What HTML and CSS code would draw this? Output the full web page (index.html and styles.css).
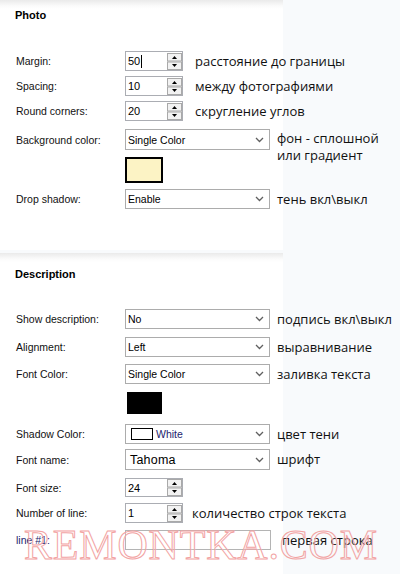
FILE: index.html
```html
<!DOCTYPE html>
<html>
<head>
<meta charset="utf-8">
<link rel="stylesheet" href="styles.css">
</head>
<body>
<div class="page">
  <section class="panel panel-photo">
    <h2 class="panel-title">Photo</h2>
    <div class="row first-photo">
      <span class="lbl">Margin:</span>
      <div class="spin"><span class="val">50<span class="caret"></span></span>
        <svg class="spin-btns" width="15" height="17" viewBox="0 0 15 17"><rect x="0.5" y="0.5" width="14" height="7.5" fill="#f2f2f2" stroke="#a9a9a9"/><rect x="0.5" y="9" width="14" height="7.5" fill="#f2f2f2" stroke="#a9a9a9"/><path d="M5 6 L7.5 3 L10 6 Z" fill="#000"/><path d="M5 11 L7.5 14 L10 11 Z" fill="#000"/></svg>
      </div>
      <span class="hint hs">расстояние до границы</span>
    </div>
    <div class="row g5">
      <span class="lbl">Spacing:</span>
      <div class="spin"><span class="val">10</span>
        <svg class="spin-btns" width="15" height="17" viewBox="0 0 15 17"><rect x="0.5" y="0.5" width="14" height="7.5" fill="#f2f2f2" stroke="#a9a9a9"/><rect x="0.5" y="9" width="14" height="7.5" fill="#f2f2f2" stroke="#a9a9a9"/><path d="M5 6 L7.5 3 L10 6 Z" fill="#000"/><path d="M5 11 L7.5 14 L10 11 Z" fill="#000"/></svg>
      </div>
      <span class="hint hs">между фотографиями</span>
    </div>
    <div class="row g5">
      <span class="lbl">Round corners:</span>
      <div class="spin"><span class="val">20</span>
        <svg class="spin-btns" width="15" height="17" viewBox="0 0 15 17"><rect x="0.5" y="0.5" width="14" height="7.5" fill="#f2f2f2" stroke="#a9a9a9"/><rect x="0.5" y="9" width="14" height="7.5" fill="#f2f2f2" stroke="#a9a9a9"/><path d="M5 6 L7.5 3 L10 6 Z" fill="#000"/><path d="M5 11 L7.5 14 L10 11 Z" fill="#000"/></svg>
      </div>
      <span class="hint hs">скругление углов</span>
    </div>
    <div class="row g8 row-top">
      <span class="lbl">Background color:</span>
      <div class="select"><span class="val">Single Color</span>
        <svg class="chev" width="9" height="6" viewBox="0 0 9 6"><path d="M1 1 L4.5 4.5 L8 1" fill="none" stroke="#606060" stroke-width="1.3"/></svg>
      </div>
      <span class="hint hd two">фон - сплошной<br>или градиент</span>
    </div>
    <div class="row g7 swatch-row">
      <span class="lbl"></span>
      <div class="swatch cream"></div>
    </div>
    <div class="row g6">
      <span class="lbl">Drop shadow:</span>
      <div class="select"><span class="val">Enable</span>
        <svg class="chev" width="9" height="6" viewBox="0 0 9 6"><path d="M1 1 L4.5 4.5 L8 1" fill="none" stroke="#606060" stroke-width="1.3"/></svg>
      </div>
      <span class="hint hd">тень вкл\выкл</span>
    </div>
  </section>

  <section class="panel panel-desc">
    <h2 class="panel-title">Description</h2>
    <div class="row first-desc">
      <span class="lbl">Show description:</span>
      <div class="select"><span class="val">No</span>
        <svg class="chev" width="9" height="6" viewBox="0 0 9 6"><path d="M1 1 L4.5 4.5 L8 1" fill="none" stroke="#606060" stroke-width="1.3"/></svg>
      </div>
      <span class="hint hd">подпись вкл\выкл</span>
    </div>
    <div class="row g8">
      <span class="lbl">Alignment:</span>
      <div class="select"><span class="val">Left</span>
        <svg class="chev" width="9" height="6" viewBox="0 0 9 6"><path d="M1 1 L4.5 4.5 L8 1" fill="none" stroke="#606060" stroke-width="1.3"/></svg>
      </div>
      <span class="hint hd">выравнивание</span>
    </div>
    <div class="row g7">
      <span class="lbl">Font Color:</span>
      <div class="select"><span class="val">Single Color</span>
        <svg class="chev" width="9" height="6" viewBox="0 0 9 6"><path d="M1 1 L4.5 4.5 L8 1" fill="none" stroke="#606060" stroke-width="1.3"/></svg>
      </div>
      <span class="hint hd">заливка текста</span>
    </div>
    <div class="row g8 swatch-row2">
      <span class="lbl"></span>
      <div class="swatch black"></div>
    </div>
    <div class="row g10">
      <span class="lbl">Shadow Color:</span>
      <div class="select"><span class="mini-swatch"></span><span class="val navy">White</span>
        <svg class="chev" width="9" height="6" viewBox="0 0 9 6"><path d="M1 1 L4.5 4.5 L8 1" fill="none" stroke="#606060" stroke-width="1.3"/></svg>
      </div>
      <span class="hint hd">цвет тени</span>
    </div>
    <div class="row g5 tall">
      <span class="lbl">Font name:</span>
      <div class="select"><span class="val big">Tahoma</span>
        <svg class="chev" width="9" height="6" viewBox="0 0 9 6"><path d="M1 1 L4.5 4.5 L8 1" fill="none" stroke="#606060" stroke-width="1.3"/></svg>
      </div>
      <span class="hint hd">шрифт</span>
    </div>
    <div class="row g8 short">
      <span class="lbl">Font size:</span>
      <div class="spin"><span class="val">24</span>
        <svg class="spin-btns" width="15" height="17" viewBox="0 0 15 17"><rect x="0.5" y="0.5" width="14" height="7.5" fill="#f2f2f2" stroke="#a9a9a9"/><rect x="0.5" y="9" width="14" height="7.5" fill="#f2f2f2" stroke="#a9a9a9"/><path d="M5 6 L7.5 3 L10 6 Z" fill="#000"/><path d="M5 11 L7.5 14 L10 11 Z" fill="#000"/></svg>
      </div>
    </div>
    <div class="row g6">
      <span class="lbl">Number of line:</span>
      <div class="spin"><span class="val">1</span>
        <svg class="spin-btns" width="15" height="17" viewBox="0 0 15 17"><rect x="0.5" y="0.5" width="14" height="7.5" fill="#f2f2f2" stroke="#a9a9a9"/><rect x="0.5" y="9" width="14" height="7.5" fill="#f2f2f2" stroke="#a9a9a9"/><path d="M5 6 L7.5 3 L10 6 Z" fill="#000"/><path d="M5 11 L7.5 14 L10 11 Z" fill="#000"/></svg>
      </div>
      <span class="hint hn">количество строк текста</span>
    </div>
    <div class="row g7">
      <span class="lbl navy">line #1:</span>
      <div class="textbox"></div>
      <span class="hint ht">первая строка</span>
    </div>
  </section>
  <div class="watermark">REMONTKA.COM</div>
</div>
</body>
</html>
```

FILE: styles.css
```css
html, body {
  margin: 0;
  padding: 0;
}
body {
  background: #f8fafc;
  font-family: "Liberation Sans", Arial, sans-serif;
  font-size: 10.5px;
  color: #111;
}
.page {
  position: relative;
  width: 400px;
  height: 574px;
  overflow: hidden;
}
.panel {
  display: flex;
  flex-direction: column;
  background: linear-gradient(#eaeaea, #fbfbfb 6px, #ffffff 9px) no-repeat 0 0 / 283px 100%;
}
.panel-photo {
  height: 250px;
}
.panel-desc {
  margin-top: 3px;
  height: 321px;
}
.panel-title {
  margin: 0;
  padding-left: 15px;
  font-size: 11px;
  font-weight: bold;
  line-height: 13px;
  color: #000;
}
.panel-photo .panel-title { padding-top: 9px; }
.panel-desc .panel-title { padding-top: 15px; }

.row {
  display: flex;
  align-items: center;
  height: 20px;
  padding-left: 16px;
}
.first-photo { margin-top: 29px; }
.first-desc { margin-top: 28px; }
.g5 { margin-top: 5px; }
.g6 { margin-top: 6px; }
.g7 { margin-top: 7px; }
.g8 { margin-top: 8px; }
.g10 { margin-top: 10px; }
.tall { height: 21px; }
.short { height: 19px; }
.row-top { height: 21px; overflow: visible; }
.swatch-row { height: 26px; }
.swatch-row2 { height: 22px; }

.lbl {
  width: 109px;
  flex: none;
  color: #111;
  white-space: nowrap;
}
.navy { color: #1e1e6e; }

.spin {
  box-sizing: border-box;
  width: 58px;
  height: 100%;
  border: 1px solid #abadb3;
  background: #fff;
  display: flex;
  align-items: center;
  justify-content: space-between;
  padding-left: 2px;
  padding-right: 0px;
}
.spin .val {
  display: flex;
  align-items: center;
  color: #000;
  font-size: 11px;
}
.caret {
  display: inline-block;
  width: 1px;
  height: 13px;
  background: #000;
  margin-left: 1px;
}
.spin-btns { display: block; flex: none; }

.select {
  box-sizing: border-box;
  width: 145px;
  height: 100%;
  border: 1px solid #acacac;
  background: #fff;
  display: flex;
  align-items: center;
  padding-left: 2px;
  padding-right: 5px;
}
.select .val {
  flex: 1;
  color: #000;
  white-space: nowrap;
}
.select .val.navy { color: #1e1e6e; }
.select .val.big {
  font-size: 12.5px;
  letter-spacing: 0.2px;
  padding-left: 2px;
}
.chev { display: block; flex: none; }
.mini-swatch {
  box-sizing: border-box;
  width: 22px;
  height: 12px;
  border: 1px solid #000;
  background: #fff;
  margin-left: 3px;
  margin-right: 3px;
  flex: none;
}

.textbox {
  box-sizing: border-box;
  width: 146px;
  height: 100%;
  border: 1px solid #b4b4b4;
  background: #fff;
}

.swatch { box-sizing: border-box; flex: none; }
.swatch.cream {
  width: 38px;
  height: 26px;
  border: 2px solid #000;
  background: #fcf3c5;
}
.swatch.black {
  width: 35px;
  height: 22px;
  margin-left: 2px;
  background: #000;
}

.hint {
  font-family: "Open Sans", "Noto Sans", sans-serif;
  font-size: 13px;
  color: #111;
  white-space: nowrap;
  line-height: 17px;
}
.hs { margin-left: 12px; }
.hn { margin-left: 9px; }
.hd { margin-left: 7px; }
.ht { margin-left: 11px; }
.hint.two {
  align-self: flex-start;
  margin-top: 1px;
  height: 20px;
  overflow: visible;
}

.watermark {
  position: absolute;
  left: 24px;
  top: 521px;
  font-family: "Liberation Serif", "Times New Roman", serif;
  font-size: 42px;
  letter-spacing: 0.8px;
  color: rgba(255, 255, 255, 0.15);
  -webkit-text-stroke: 1px #f2a3a3;
  line-height: 48px;
  pointer-events: none;
  white-space: nowrap;
}
```
